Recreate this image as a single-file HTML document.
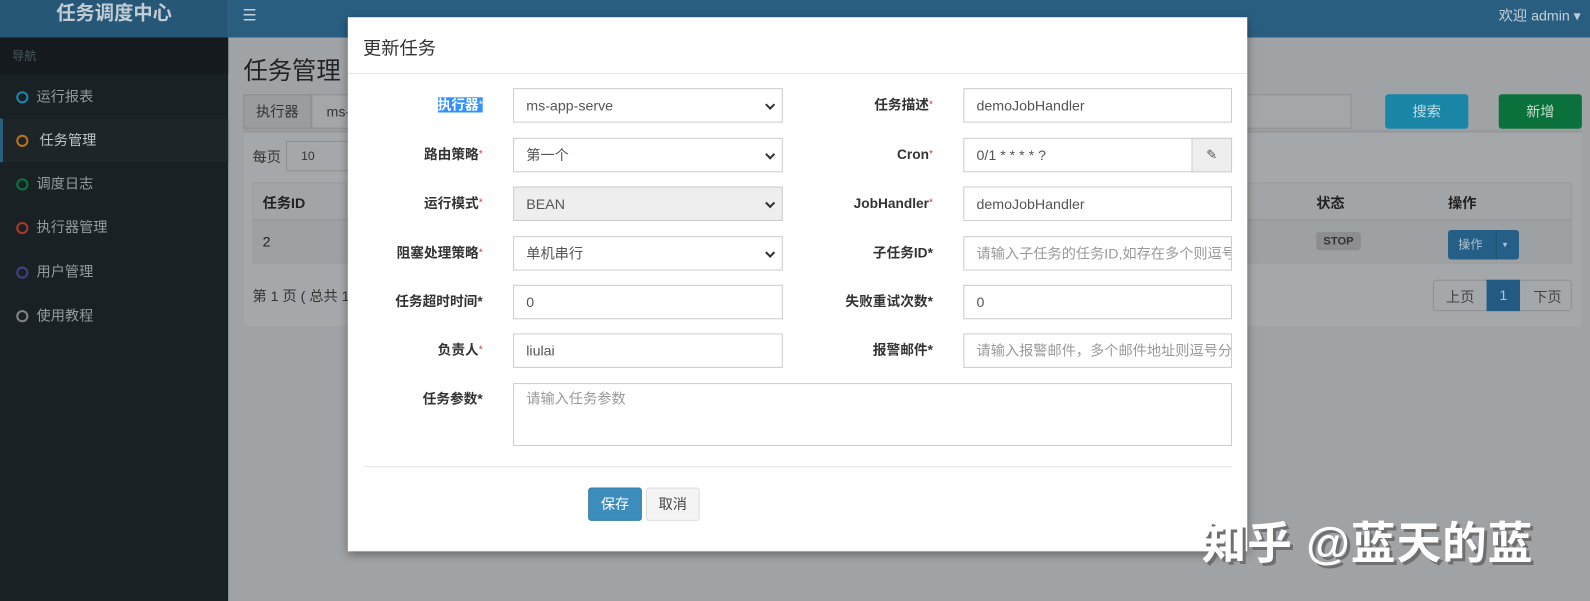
<!DOCTYPE html>
<html><head><meta charset="utf-8"><style>
*{box-sizing:border-box;margin:0;padding:0}
html,body{width:1590px;height:601px;overflow:hidden;background:#a3a6a9}
body{font-family:"Liberation Sans","Noto Sans CJK SC",sans-serif;font-size:14px;color:#333}
#w{position:absolute;left:0;top:0;width:1568px;height:593px;transform:scale(1.01403,1.01349);transform-origin:0 0;background:#a0a3a6}
.a{position:absolute}
.side{left:0;top:37px;width:225px;height:556px;background:#1a2124}
.logo{left:0;top:0;width:225px;height:37px;background:#275776;color:#c2ccd4;font-weight:bold;font-size:19px;text-align:center;line-height:28px}
.hdr{left:225px;top:0;width:1343px;height:37px;background:#2a5e80;color:#c2d0da}
.nav{left:0;width:225px;height:43px;color:#929ca0;font-size:14px;line-height:43px;padding-left:36px}
.nav i{position:absolute;left:16px;top:16px;width:12px;height:12px;border:2px solid;border-radius:50%}
.lbl{width:160px;text-align:right;font-weight:bold;font-size:13.5px;color:#333;line-height:34px}
.lbl b{color:#d33;font-weight:normal;font-size:10px;vertical-align:top}
.in{height:34px;border:1px solid #ccc;background:#fff;padding-left:12px;line-height:32px;color:#555;font-size:14px}
.in.ph{color:#999;white-space:nowrap;overflow:hidden}
.sel:after{content:"";position:absolute;right:8px;top:12px;width:5px;height:5px;border-right:2px solid #333;border-bottom:2px solid #333;transform:rotate(45deg)}
</style></head><body><div id="w">
<div class="a logo">任务调度中心</div>
<div class="a hdr"><span class="a" style="left:14px;top:5px;font-size:16px">☰</span><span class="a" style="left:1253px;top:5px;font-size:14px">欢迎 admin ▾</span></div>
<div class="a side"></div>
<div class="a" style="left:0;top:37px;width:225px;height:36px;background:#141a1d;color:#4a565c;font-size:12px;line-height:36px;padding-left:12px">导航</div>
<div class="a nav" style="top:74px"><i style="color:#1788ae"></i>运行报表</div>
<div class="a nav" style="top:117px;background:#1d2529;border-left:3px solid #2b5f80;color:#bcc4c8"><i style="color:#bb741a;left:13px"></i>任务管理</div>
<div class="a nav" style="top:160px"><i style="color:#0c743f"></i>调度日志</div>
<div class="a nav" style="top:203px"><i style="color:#ad382a"></i>执行器管理</div>
<div class="a nav" style="top:247px"><i style="color:#463f88"></i>用户管理</div>
<div class="a nav" style="top:290px"><i style="color:#848484"></i>使用教程</div>

<div class="a" style="left:240px;top:50px;font-size:24px;color:#222">任务管理</div>
<div class="a" style="left:240px;top:93px;width:67px;height:34px;background:#9a9c9e;border:1px solid #8c8e90;text-align:center;line-height:32px;color:#333">执行器</div>
<div class="a" style="left:307px;top:93px;width:60px;height:34px;background:#a4a6a8;border:1px solid #8c8e90;padding-left:14px;line-height:32px;color:#333">ms-</div>
<div class="a" style="left:1200px;top:93px;width:133px;height:34px;background:#a4a6a8;border:1px solid #8e9092"></div>
<div class="a" style="left:1366px;top:93px;width:82px;height:34px;background:#1986a8;border-radius:3px;color:#c0dde6;text-align:center;line-height:34px">搜索</div>
<div class="a" style="left:1478px;top:93px;width:82px;height:34px;background:#0b713c;border-radius:3px;color:#c0ddcd;text-align:center;line-height:34px">新增</div>
<div class="a" style="left:240px;top:128px;width:1320px;height:194px;background:#a5a8aa;border-top:3px solid #97999b"></div>
<div class="a" style="left:249px;top:145px;color:#333">每页</div>
<div class="a" style="left:282px;top:139px;width:70px;height:30px;border:1px solid #8e9092;padding-left:14px;line-height:28px;font-size:12px">10</div>
<div class="a" style="left:249px;top:180px;width:1301px;height:37px;background:#a2a5a7;border:1px solid #999b9d"></div>
<div class="a" style="left:249px;top:217px;width:1301px;height:43px;background:#9e a1a3;background:#9ea1a3;border:1px solid #999b9d"></div>
<div class="a" style="left:259px;top:190px;font-weight:bold;color:#222">任务ID</div>
<div class="a" style="left:259px;top:230px;color:#222">2</div>
<div class="a" style="left:1298px;top:190px;font-weight:bold;color:#222">状态</div>
<div class="a" style="left:1428px;top:190px;font-weight:bold;color:#222">操作</div>
<div class="a" style="left:1298px;top:229px;width:44px;height:18px;background:#8b8d90;border-radius:3px;font-size:11px;font-weight:bold;text-align:center;line-height:18px;color:#333">STOP</div>
<div class="a" style="left:1428px;top:227px;width:70px;height:29px;background:#255e86;border-radius:3px;color:#b0c3d1;font-size:12px;line-height:29px;padding-left:10px">操作<span class="a" style="left:47px;top:0;width:1px;height:29px;background:#1e5275"></span><span class="a" style="left:54px;top:0;font-size:9px">▾</span></div>
<div class="a" style="left:249px;top:282px;color:#333">第 1 页 ( 总共 1</div>
<div class="a" style="left:1413px;top:276px;width:137px;height:31px;border:1px solid #8e9092;border-radius:3px"></div>
<div class="a" style="left:1426px;top:283px;color:#444">上页</div>
<div class="a" style="left:1466px;top:276px;width:33px;height:31px;background:#235a82;color:#b0c3d1;text-align:center;line-height:31px">1</div>
<div class="a" style="left:1512px;top:283px;color:#444">下页</div>

<div class="a" style="left:343px;top:17px;width:887px;height:527px;background:#fff;box-shadow:0 3px 9px rgba(0,0,0,.4)">
 <div class="a" style="left:15px;top:17px;font-size:18px;color:#333">更新任务</div>
 <div class="a" style="left:0;top:55px;width:887px;height:1px;background:#e5e5e5"></div>
</div>
<div class="a lbl" style="left:316px;top:87px"><span style="background:#3390ff;color:#fff">执行器<b style="color:#fff">*</b></span></div>
<div class="a lbl" style="left:316px;top:136px">路由策略<b>*</b></div>
<div class="a lbl" style="left:316px;top:184px">运行模式<b>*</b></div>
<div class="a lbl" style="left:316px;top:233px">阻塞处理策略<b>*</b></div>
<div class="a lbl" style="left:316px;top:281px">任务超时时间*</div>
<div class="a lbl" style="left:316px;top:329px">负责人<b>*</b></div>
<div class="a lbl" style="left:316px;top:378px;line-height:32px">任务参数*</div>
<div class="a lbl" style="left:760px;top:87px">任务描述<b>*</b></div>
<div class="a lbl" style="left:760px;top:136px">Cron<b>*</b></div>
<div class="a lbl" style="left:760px;top:184px">JobHandler<b>*</b></div>
<div class="a lbl" style="left:760px;top:233px">子任务ID*</div>
<div class="a lbl" style="left:760px;top:281px">失败重试次数*</div>
<div class="a lbl" style="left:760px;top:329px">报警邮件*</div>

<div class="a in sel" style="left:506px;top:87px;width:266px">ms-app-serve</div>
<div class="a in sel" style="left:506px;top:136px;width:266px">第一个</div>
<div class="a in sel" style="left:506px;top:184px;width:266px;background:#eee">BEAN</div>
<div class="a in sel" style="left:506px;top:233px;width:266px">单机串行</div>
<div class="a in" style="left:506px;top:281px;width:266px">0</div>
<div class="a in" style="left:506px;top:329px;width:266px">liulai</div>
<div class="a in ph" style="left:506px;top:378px;width:709px;height:62px;line-height:28px">请输入任务参数</div>
<div class="a in" style="left:950px;top:87px;width:265px">demoJobHandler</div>
<div class="a in" style="left:950px;top:136px;width:265px">0/1 * * * * ?<span class="a" style="right:-1px;top:-1px;width:40px;height:34px;background:#eee;border:1px solid #ccc;text-align:center;line-height:32px;font-size:13px">&#9998;</span></div>
<div class="a in" style="left:950px;top:184px;width:265px">demoJobHandler</div>
<div class="a in ph" style="left:950px;top:233px;width:265px">请输入子任务的任务ID,如存在多个则逗号分隔</div>
<div class="a in" style="left:950px;top:281px;width:265px">0</div>
<div class="a in ph" style="left:950px;top:329px;width:265px">请输入报警邮件，多个邮件地址则逗号分隔</div>
<div class="a" style="left:358px;top:460px;width:857px;height:1px;background:#e5e5e5"></div>
<div class="a" style="left:580px;top:481px;width:53px;height:33px;background:#3c8dbc;border:1px solid #367fa9;border-radius:3px;color:#fff;text-align:center;line-height:31px">保存</div>
<div class="a" style="left:637px;top:481px;width:53px;height:33px;background:#f4f4f4;border:1px solid #ddd;border-radius:3px;color:#444;text-align:center;line-height:31px">取消</div>

<div class="a" style="left:1185px;top:500px;font-size:44px;font-weight:bold;color:#fff;text-shadow:3px 3px 0 #6f6f6f;white-space:nowrap;letter-spacing:1px">知乎 @蓝天的蓝</div>
</div></body></html>
